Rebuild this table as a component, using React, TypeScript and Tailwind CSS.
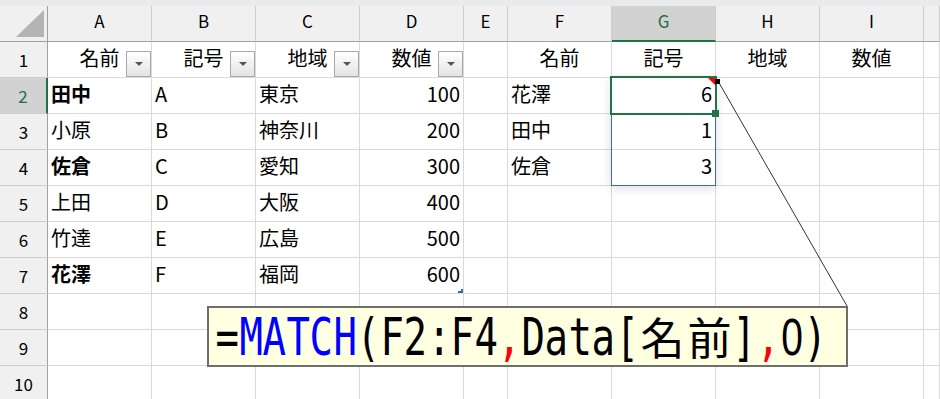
import React from "react";

type Cell = { t?: string; a?: "l" | "r" | "c"; b?: boolean };

const LETTERS = ["A", "B", "C", "D", "E", "F", "G", "H", "I", ""];

const data: Cell[][] = [
  [
    { t: "名前", a: "c" },
    { t: "記号", a: "c" },
    { t: "地域", a: "c" },
    { t: "数値", a: "c" },
    {},
    { t: "名前", a: "c" },
    { t: "記号", a: "c" },
    { t: "地域", a: "c" },
    { t: "数値", a: "c" },
    {},
  ],
  [
    { t: "田中", b: true },
    { t: "A" },
    { t: "東京" },
    { t: "100", a: "r" },
    {},
    { t: "花澤" },
    { t: "6", a: "r" },
    {},
    {},
    {},
  ],
  [
    { t: "小原" },
    { t: "B" },
    { t: "神奈川" },
    { t: "200", a: "r" },
    {},
    { t: "田中" },
    { t: "1", a: "r" },
    {},
    {},
    {},
  ],
  [
    { t: "佐倉", b: true },
    { t: "C" },
    { t: "愛知" },
    { t: "300", a: "r" },
    {},
    { t: "佐倉" },
    { t: "3", a: "r" },
    {},
    {},
    {},
  ],
  [{ t: "上田" }, { t: "D" }, { t: "大阪" }, { t: "400", a: "r" }, {}, {}, {}, {}, {}, {}],
  [{ t: "竹達" }, { t: "E" }, { t: "広島" }, { t: "500", a: "r" }, {}, {}, {}, {}, {}, {}],
  [{ t: "花澤", b: true }, { t: "F" }, { t: "福岡" }, { t: "600", a: "r" }, {}, {}, {}, {}, {}, {}],
  [{}, {}, {}, {}, {}, {}, {}, {}, {}, {}],
  [{}, {}, {}, {}, {}, {}, {}, {}, {}, {}],
  [{}, {}, {}, {}, {}, {}, {}, {}, {}, {}],
];

type F = { c: string; col: string; cjk?: boolean; sans?: boolean };
const BL = "text-black";
const BU = "text-[#0000ff]";
const RD = "text-[#ff0000]";
const formula: F[] = [
  { c: "=", col: BL },
  { c: "M", col: BU },
  { c: "A", col: BU },
  { c: "T", col: BU },
  { c: "C", col: BU },
  { c: "H", col: BU },
  { c: "(", col: BL },
  { c: "F", col: BL },
  { c: "2", col: BL },
  { c: ":", col: BL },
  { c: "F", col: BL },
  { c: "4", col: BL },
  { c: ",", col: RD },
  { c: "D", col: BL },
  { c: "a", col: BL },
  { c: "t", col: BL },
  { c: "a", col: BL },
  { c: "[", col: BL },
  { c: "名", col: BL, cjk: true },
  { c: "前", col: BL, cjk: true },
  { c: "]", col: BL },
  { c: ",", col: RD },
  { c: "0", col: BL, sans: true },
  { c: ")", col: BL },
];

function FilterButton() {
  return (
    <div className="absolute right-0 bottom-0 w-[25px] h-[26px] border border-[#a9a9a9] bg-linear-to-b from-white to-[#e3e3e3] flex items-center justify-center">
      <div className="w-0 h-0 border-l-[4px] border-r-[4px] border-t-[4px] border-l-transparent border-r-transparent border-t-[#555555]" />
    </div>
  );
}

export default function App() {
  return (
    <div className="relative w-[940px] h-[399px] overflow-hidden bg-white font-['Noto_Sans_CJK_JP','Noto_Sans',sans-serif] text-black">
      <div className="h-[6px] bg-[#e8ebee]" />
      <div className="grid grid-cols-[48px_104px_104px_104px_104px_44px_104px_104px_104px_104px_1fr] auto-rows-[36px]">
        {/* corner */}
        <div className="relative bg-[#f0f0f0] border-r border-b border-[#a0a0a0]">
          <svg className="absolute left-0 top-0" width="47" height="35" viewBox="0 0 47 35">
            <polygon points="16,31 44,31 44,4" fill="#b4b4b4" />
          </svg>
        </div>
        {LETTERS.map((l, i) => {
          const sel = l === "G";
          return (
            <div
              key={"h" + i}
              className={
                "flex justify-center items-start pt-[3px] text-[17px] leading-none border-r border-r-[#cdcdcd] " +
                (sel
                  ? "bg-[#d2d2d2] text-[#1f6e43] border-b-2 border-b-[#217346]"
                  : "bg-[#f0f0f0] border-b border-b-[#a0a0a0]")
              }
            >
              <span className="pt-[3px]">{l}</span>
            </div>
          );
        })}
        {data.map((row, r) => (
          <React.Fragment key={"r" + r}>
            <div
              className={
                "flex items-center justify-center text-[17px] leading-none border-b border-b-[#cdcdcd] " +
                (r === 1
                  ? "bg-[#d2d2d2] text-[#1f6e43] border-r-2 border-r-[#217346]"
                  : "bg-[#f0f0f0] border-r border-r-[#a0a0a0]")
              }
            >
              {r + 1}
            </div>
            {row.map((c, ci) => {
              const isG2 = r === 1 && ci === 6;
              const isD7 = r === 6 && ci === 3;
              const hasFilter = r === 0 && ci < 4;
              return (
                <div
                  key={"c" + r + "-" + ci}
                  className={
                    "flex items-center px-[3px] pb-[4px] text-[20px] leading-none whitespace-nowrap border-r border-b border-[#dadada] " +
                    (c.a === "r" ? "justify-end " : c.a === "c" ? "justify-center " : "justify-start ") +
                    (c.b ? "font-bold " : "") +
                    (isG2 || isD7 || hasFilter ? "relative" : "")
                  }
                >
                  {c.t ? <span>{c.t}</span> : null}
                  {hasFilter && <FilterButton />}
                  {isD7 && (
                    <div className="absolute right-0 bottom-0 w-[5px] h-[4px] border-r-2 border-b-2 border-[#3d63b8]" />
                  )}
                  {isG2 && (
                    <>
                      <div className="absolute left-[-1px] top-[-1px] w-[105px] h-[109px] border border-[#3e67b8] shadow-[0_2px_10px_rgba(0,0,0,0.14)] z-10" />
                      <div className="absolute left-[-2px] top-[-2px] w-[107px] h-[39px] border-2 border-[#217346] z-20" />
                      <div className="absolute right-0 top-0 w-0 h-0 border-t-[7px] border-l-[7px] border-t-[#ff0000] border-l-transparent z-20" />
                      <div className="absolute left-[100px] top-[32px] w-[7px] h-[7px] bg-[#217346] z-30" />
                    </>
                  )}
                </div>
              );
            })}
          </React.Fragment>
        ))}
      </div>

      <svg className="absolute left-0 top-0 pointer-events-none z-40" width="940" height="399" viewBox="0 0 940 399">
        <line x1="718" y1="81" x2="847" y2="306" stroke="#333333" strokeWidth="1" />
        <rect x="715" y="79" width="5" height="5" fill="#000000" />
      </svg>

      <div className="absolute left-[207px] top-[306px] w-[641px] h-[61px] border-2 border-[#6e6e6e] bg-[#ffffe1] z-50 pl-[7px] pt-[4px]">
        <div className="flex items-baseline leading-none">
          {formula.map((f, i) =>
            f.cjk ? (
              <span
                key={i}
                className={"inline-flex justify-center w-[47px] text-[44px] font-['Noto_Sans_CJK_JP',sans-serif] " + f.col}
              >
                {f.c}
              </span>
            ) : (
              <span key={i} className={"inline-flex justify-center w-[23.5px] " + f.col}>
                <span
                  className={
                    "inline-block scale-x-[0.765] " +
                    (f.sans
                      ? "text-[51px] font-['Liberation_Sans',sans-serif]"
                      : "text-[51px] font-['DejaVu_Sans_Mono',monospace]")
                  }
                >
                  {f.c}
                </span>
              </span>
            )
          )}
        </div>
      </div>
    </div>
  );
}
